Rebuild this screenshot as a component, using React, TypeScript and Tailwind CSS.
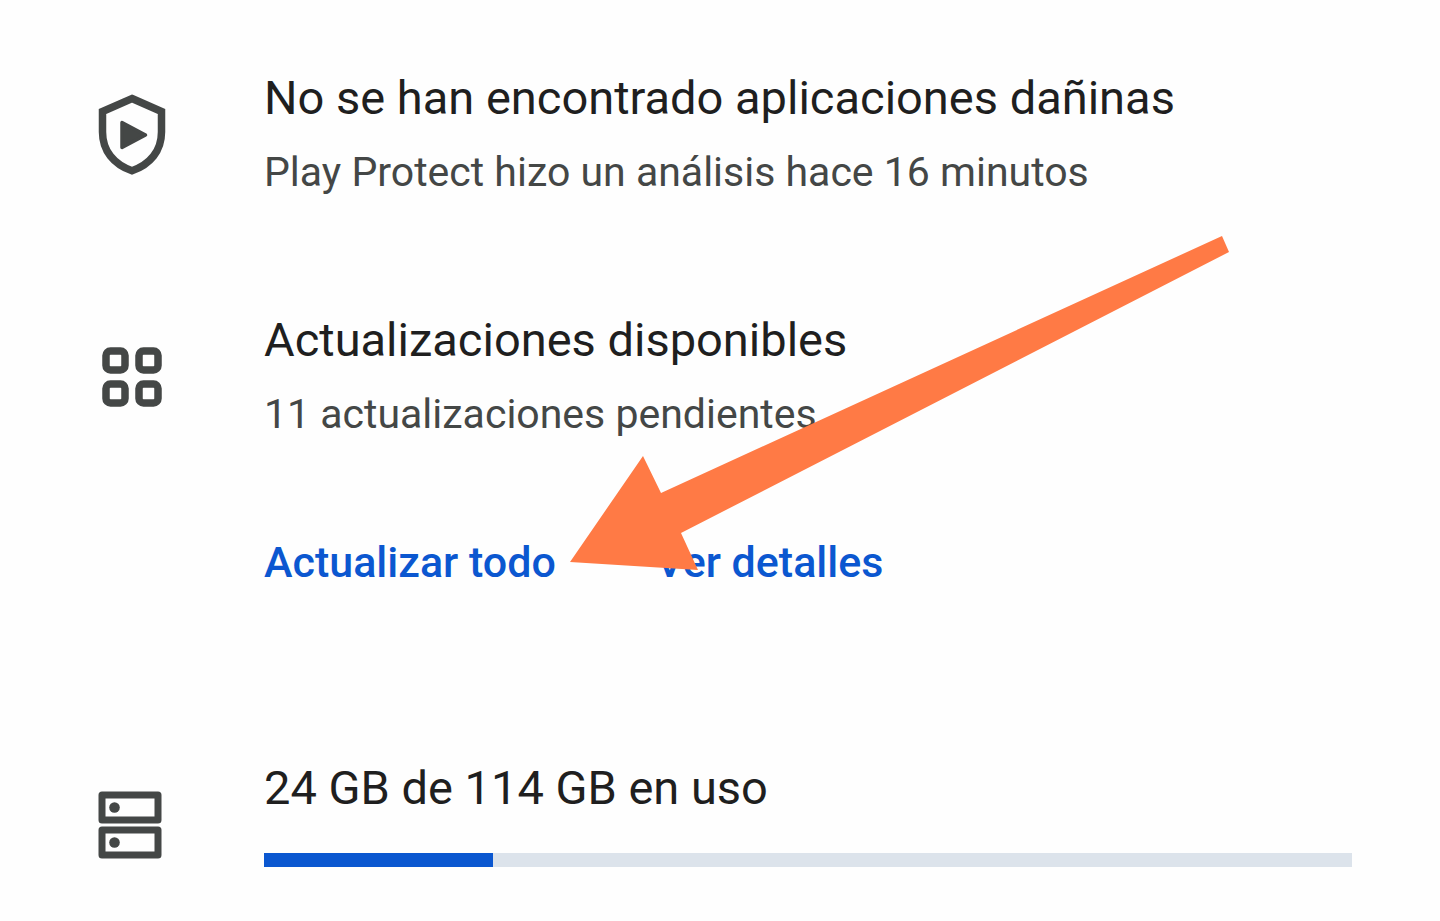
import type { ReactNode } from "react";

const usedGb = 24;
const totalGb = 114;

function ShieldIcon() {
  return (
    <svg width="68" height="82" viewBox="0 0 68 82" fill="none" aria-hidden="true">
      <path
        d="M34 4.500 63.500 17.500V38C63.500 57 52 70.500 34 76.800 16 70.500 4.500 57 4.500 38V17.500Z"
        stroke="#444746"
        strokeWidth="7.500"
      />
      <path
        d="M24 28.500V53.500L47.500 41Z"
        fill="#444746"
        stroke="#444746"
        strokeWidth="3.500"
        strokeLinejoin="round"
      />
    </svg>
  );
}

function AppsIcon() {
  return (
    <svg width="60" height="60" viewBox="0 0 60 60" fill="none" stroke="#444746" strokeWidth="7.500" aria-hidden="true">
      <rect x="4" y="4" width="19" height="19" rx="4.500" />
      <rect x="37" y="4" width="19" height="19" rx="4.500" />
      <rect x="4" y="37" width="19" height="19" rx="4.500" />
      <rect x="37" y="37" width="19" height="19" rx="4.500" />
    </svg>
  );
}

function StorageIcon() {
  return (
    <svg width="68" height="68" viewBox="0 0 68 68" aria-hidden="true">
      <g fill="none" stroke="#444746" strokeWidth="7" strokeLinejoin="round">
        <rect x="4" y="4" width="56" height="25" />
        <rect x="4" y="39" width="56" height="25" />
      </g>
      <circle cx="16.500" cy="16.500" r="5.300" fill="#444746" />
      <circle cx="16.500" cy="51.500" r="5.300" fill="#444746" />
    </svg>
  );
}

function Row({ icon, children }: { icon: ReactNode; children: ReactNode }) {
  return (
    <div className="grid grid-cols-[264px_1fr] items-center">
      <div className="flex justify-center">{icon}</div>
      <div>{children}</div>
    </div>
  );
}

const titleClass = "text-[47px] leading-[74px] font-normal text-[#1f1f1f]";
const subtitleClass = "text-[41px] leading-[74px] text-[#444746]";

export default function App() {
  return (
    <main className="min-h-screen bg-[#fefefe] pt-[61px] pr-[88px] pb-[22px] font-['Roboto',sans-serif]">
      <section>
        <Row icon={<ShieldIcon />}>
          <h2 className={titleClass}>No se han encontrado aplicaciones dañinas</h2>
          <p className={subtitleClass}>Play Protect hizo un análisis hace 16 minutos</p>
        </Row>
      </section>

      <section className="relative mt-[94px]">
        <Row icon={<AppsIcon />}>
          <h2 className={titleClass}>Actualizaciones disponibles</h2>
          <p className={subtitleClass}>11 actualizaciones pendientes</p>
        </Row>
        <div className="mt-[74px] flex gap-[100px] pl-[264px] text-[43px] leading-[74px] font-medium text-[#0b57d0]">
          <button type="button">Actualizar todo</button>
          <button type="button">Ver detalles</button>
        </div>
        <svg
          className="pointer-events-none absolute -top-[67px] left-[570px]"
          width="660"
          height="335"
          viewBox="0 0 660 335"
          aria-hidden="true"
        >
          <path d="M0 326 73 220 91 257 652 0 659 16 111 297 128 334Z" fill="#ff7a45" />
        </svg>
      </section>

      <section className="mt-[152px]">
        <Row icon={<StorageIcon />}>
          <h2 className={titleClass}>
            {usedGb} GB de {totalGb} GB en uso
          </h2>
          <div
            className="mt-7 mb-8 h-[14px] bg-[#dce3eb]"
            role="progressbar"
            aria-label="Almacenamiento en uso"
            aria-valuemin={0}
            aria-valuemax={totalGb}
            aria-valuenow={usedGb}
          >
            <div className="h-full bg-[#0b57d0]" style={{ width: `${(usedGb / totalGb) * 100}%` }} />
          </div>
        </Row>
      </section>
    </main>
  );
}
